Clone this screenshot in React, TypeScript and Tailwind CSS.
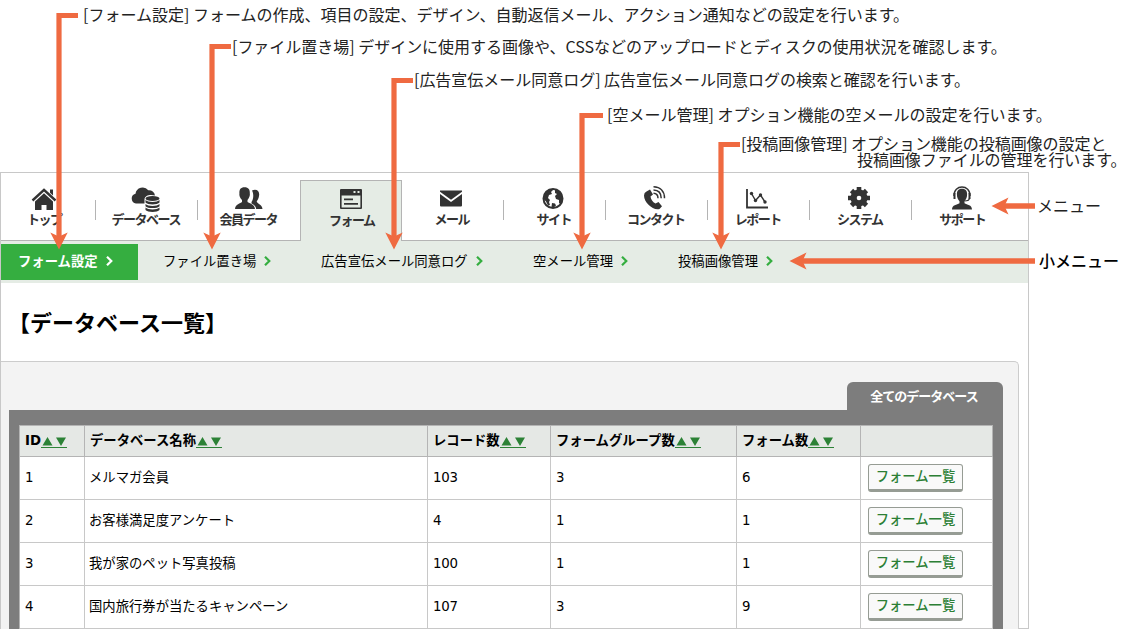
import React from 'react';
import { clsx } from 'clsx';

const ORANGE = '#ef6a41';

interface MenuItem {
  label: string;
  icon: React.ReactNode;
  active?: boolean;
}

const Icon: React.FC<{ children: React.ReactNode }> = ({ children }) => (
  <svg width="32" height="28" viewBox="0 0 32 28" fill="#333" className="shrink-0">
    {children}
  </svg>
);

const menu: MenuItem[] = [
  {
    label: 'トップ',
    icon: (
      <Icon>
        <path d="M4.500 15.500 16 4.800l11.500 10.700" fill="none" stroke="#333" strokeWidth="2.400" />
        <path d="M22 4.500h3v6l-3-2.800z" />
        <path d="M16 8.300 25 16.500V25h-6.500v-5h-5v5H7v-8.500z" />
      </Icon>
    ),
  },
  {
    label: 'データベース',
    icon: (
      <Icon>
        <path d="M7 18.500a5 5 0 0 1-.5-9.800 7.200 7.200 0 0 1 12.800-3.500 6 6 0 0 1 6.700 5.300c-5-1.500-10 0-10.500 3.500v4.500z" />
        <ellipse cx="23.500" cy="13.500" rx="7" ry="2.500" />
        <path d="M16.500 15c2 2.600 12 2.600 14 0v2.600c-2 2.500-12 2.500-14 0zM16.500 19c2 2.600 12 2.600 14 0v2.200c-2 2.500-12 2.500-14 0zM16.500 22.600c2 2.600 12 2.600 14 0V25c-2 2.500-12 2.500-14 0z" />
      </Icon>
    ),
  },
  {
    label: '会員データ',
    icon: (
      <Icon>
        <path d="M20 5.500c5-2 8 1 7 5.500-.4 2.500-1.200 4-2.300 5.300 0 2.400 5.300 2.900 5.800 7.700h-6.300c-.4-3-2.400-4.500-4.700-5.500v-1.500c2-2.500 2.500-8 .5-11.500z" />
        <path d="M12.500 2.200c4 0 5.600 2.600 5.300 6 .5 2.300-.8 5-2.300 6.800v2c2 1.700 7 1.700 7.500 7H3c.4-5.300 5.500-5.300 7-7v-2c-2-2-3-4.500-2.600-6.800-.2-3.700 1.200-6 5.100-6z" />
      </Icon>
    ),
  },
  {
    label: 'フォーム',
    active: true,
    icon: (
      <Icon>
        <path fillRule="evenodd" d="M6 3h20q1 0 1 1v18q0 1-1 1H6q-1 0-1-1V4q0-1 1-1zm.600 6.500V21.400h18.800V9.500zM18.500 5v2h2V5zm4 0v2h2V5z" />
        <path d="M9 12.500h9v1.800H9zM9 17h14v1.800H9z" />
      </Icon>
    ),
  },
  {
    label: 'メール',
    icon: (
      <Icon>
        <path d="M5 5.500h22v1.300l-11 8-11-8z" />
        <path d="m5 9 11 8 11-8v11.500q0 1-1 1H6q-1 0-1-1z" />
      </Icon>
    ),
  },
  {
    label: 'サイト',
    icon: (
      <Icon>
        <circle cx="16" cy="13.500" r="9.500" fill="#fff" stroke="#333" strokeWidth="2" />
        <path d="M7 10c1-3 3-5 6-6l3 1-2 2 1 2-3 1-1 3 2 2-1 2 1 3-2 .5-2-4-2-2zM18 4l6 3 1.500 5v4l-2 3-1.500-1v-3l-3-1-1-3 2-2-2-1zM15 18l3 .5 1 2-3 2.500-1.500-1z" />
      </Icon>
    ),
  },
  {
    label: 'コンタクト',
    icon: (
      <Icon>
        <path d="M7.500 6.500 11 4.600l3 5-2.500 2c.5 3.200 2 5.300 5 7l3-1.600 3.500 4.300-2.500 2.600c-6 2-15.500-6-15.500-13.400q0-3 2.500-4z" />
        <g fill="none" stroke="#333" strokeWidth="1.500">
          <path d="M14.500 8.200c3 .1 4.500 2 4.500 5" />
          <path d="M14.500 4.900c5 .1 7.700 3.300 7.700 8.300" />
          <path d="M14.500 1.800c7 .1 11 4.400 11 11.400" />
        </g>
      </Icon>
    ),
  },
  {
    label: 'レポート',
    icon: (
      <Icon>
        <g fill="none" stroke="#333" strokeWidth="1.800">
          <path d="M6 4v18.500h21" />
          <path d="m10.500 8.500 4 7 5-5.500 4.500 7" strokeWidth="1.400" />
        </g>
        <circle cx="10.500" cy="8.500" r="1.700" />
        <circle cx="14.500" cy="15.500" r="1.700" />
        <circle cx="19.500" cy="10" r="1.700" />
        <circle cx="24" cy="17" r="1.700" />
      </Icon>
    ),
  },
  {
    label: 'システム',
    icon: (
      <Icon>
        <g transform="translate(16 13)">
          <path d="M0-11V11M-11 0H11M-7.500-7.500 7.500 7.500M-7.500 7.500 7.500-7.500" stroke="#333" strokeWidth="4.600" />
          <circle r="8.500" />
          <circle r="2.300" fill="#fff" />
        </g>
      </Icon>
    ),
  },
  {
    label: 'サポート',
    icon: (
      <Icon>
        <path d="M8 11c-.5-12 16.500-12 16 0" fill="none" stroke="#333" strokeWidth="1.400" />
        <path d="M7.500 8h2v6h-2zM22.500 8h2v6h-2z" />
        <path d="M16 3.800c4 0 5.200 2.600 5.100 5.700 0 3-1.300 5.400-2.600 6.700v2c2.500 1.800 7.500 1.300 7.500 6.300H6c0-5 5-4.500 7.500-6.300v-2c-1.300-1.300-2.600-3.700-2.600-6.700-.1-3.100 1.100-5.700 5.100-5.700z" />
        <path d="M23.500 13c0 2-2.500 3-5 3" fill="none" stroke="#333" strokeWidth="1.200" />
      </Icon>
    ),
  },
];

const subMenu = [
  { label: 'フォーム設定', box: 'w-[137px] pl-[17px]', active: true },
  { label: 'ファイル置き場', box: 'w-[157px] pl-[25px]' },
  { label: '広告宣伝メール同意ログ', box: 'w-[212px] pl-[26px]' },
  { label: '空メール管理', box: 'w-[145px] pl-[26px]' },
  { label: '投稿画像管理', box: 'w-[145px] pl-[26px]' },
];

const columns = ['ID', 'データベース名称', 'レコード数', 'フォームグループ数', 'フォーム数'];

const rows = [
  ['1', 'メルマガ会員', '103', '3', '6'],
  ['2', 'お客様満足度アンケート', '4', '1', '1'],
  ['3', '我が家のペット写真投稿', '100', '1', '1'],
  ['4', '国内旅行券が当たるキャンペーン', '107', '3', '9'],
];

const gridCols = 'grid grid-cols-[65px_343px_123px_186px_124px_132px]';

const notes = [
  { text: '[フォーム設定] フォームの作成、項目の設定、デザイン、自動返信メール、アクション通知などの設定を行います。', pos: 'left-[83px] top-[6px]' },
  { text: '[ファイル置き場] デザインに使用する画像や、CSSなどのアップロードとディスクの使用状況を確認します。', pos: 'left-[232px] top-[38px] tracking-[-0.02px]' },
  { text: '[広告宣伝メール同意ログ] 広告宣伝メール同意ログの検索と確認を行います。', pos: 'left-[414px] top-[71px] tracking-[-0.02px]' },
  { text: '[空メール管理] オプション機能の空メールの設定を行います。', pos: 'left-[607px] top-[106px]' },
  { text: '[投稿画像管理] オプション機能の投稿画像の設定と', pos: 'left-[741px] top-[135px] tracking-[-0.04px]' },
  { text: '投稿画像ファイルの管理を行います。', pos: 'left-[857px] top-[151px] tracking-[-0.05px]' },
  { text: 'メニュー', pos: 'left-[1037px] top-[197px]' },
];

// x of the shaft, y of the elbow, right end of the elbow
const arrows = [
  [59, 15.5, 78],
  [212, 46.5, 231],
  [394, 80.5, 413],
  [582, 115.5, 603],
  [721, 144.5, 740],
];

const Sort = () => (
  <span className="flex h-[13px] items-center border-b border-[#2c8236]">
    <svg width="26" height="12" viewBox="0 0 26 12" fill="#2c8236">
      <path d="M6.500 2 11.500 10.500H1.500zM15 2.500h10l-5 8.500z" />
    </svg>
  </span>
);

const Annotations = () => (
  <div className="pointer-events-none absolute inset-0">
    <svg width="1138" height="629" className="absolute inset-0">
      {arrows.map(([x, y, end]) => (
        <g key={x}>
          <path d={`M${end} ${y}H${x}V240`} fill="none" stroke={ORANGE} strokeWidth="5.200" />
          <path d={`M${x} 249.500 ${x - 8.7} 232.500 ${x} 236.500 ${x + 8.7} 232.500z`} fill={ORANGE} />
        </g>
      ))}
      <path d="M1035 206H1002M1035 261H800" stroke={ORANGE} strokeWidth="5.500" />
      <path d="M991.500 206 1008.500 197.500 1004.500 206 1008.500 214.500zM789.500 261 806.500 252.500 802.500 261 806.500 269.500z" fill={ORANGE} />
    </svg>
    {notes.map((n) => (
      <p key={n.text} className={clsx('absolute text-[16px] leading-4 whitespace-nowrap text-[#222]', n.pos)}>
        {n.text}
      </p>
    ))}
    <p className="absolute top-[252px] left-[1039px] text-[16px] leading-4 font-medium whitespace-nowrap text-black">小メニュー</p>
  </div>
);

export default function App() {
  return (
    <div className="relative h-[629px] w-[1138px] overflow-hidden bg-white pt-[172px] font-['Noto_Sans_CJK_JP',sans-serif]">
      <div className="flex h-[457px] w-[1029px] flex-col border border-[#c8c8c8]">
        <nav className="flex h-[67px] shrink-0">
          {menu.map((item, i) => (
            <div key={item.label} className={clsx('flex shrink-0', i === 0 ? 'w-[95px]' : 'w-[102px]')}>
              <div
                className={clsx(
                  'flex grow flex-col items-center',
                  item.active
                    ? 'relative mt-[7px] h-[61px] border border-b-0 border-[#b4b4b4] bg-[#e5ece5] pt-[5px]'
                    : 'pt-[12px]',
                  i === 0 ? 'pr-[9px]' : !item.active && 'pr-[3px]'
                )}
              >
                {item.icon}
                <span className="-mt-[3px] mr-[-1.500px] text-[13px] leading-[18px] font-bold tracking-[-1.500px] whitespace-nowrap text-[#333]">
                  {item.label}
                </span>
              </div>
              {!item.active && i !== 2 && i < 9 && <div className="mt-[27px] h-5 w-px bg-[#b4b4b4]" />}
            </div>
          ))}
        </nav>

        <div className="flex h-[43px] shrink-0 border-t border-[#b4b4b4] bg-[#e5ece5] pt-[3px] text-[13.330px]">
          {subMenu.map((s) => (
            <a
              key={s.label}
              className={clsx('flex h-9 items-center gap-[9px] pb-[2px] whitespace-nowrap', s.box, s.active ? 'bg-[#35ae40] font-bold text-white' : 'text-black')}
            >
              {s.label}
              <svg width="7" height="10" viewBox="0 0 7 10" fill="none" stroke={s.active ? '#fff' : '#35ae40'} strokeWidth="2.200" className="-ml-px">
                <path d="m1 .8 4.300 4.200L1 9.200" />
              </svg>
            </a>
          ))}
        </div>

        <h1 className="h-[78px] shrink-0 pt-[22px] pl-[7px] text-[22px] leading-8 font-bold text-black">【データベース一覧】</h1>

        <section className="mr-[9px] flex grow flex-col rounded-tr-[5px] border-t border-r border-[#ccc] bg-[#f3f3f3] pt-[20px] pr-[15px] pl-[8px]">
          <div className="ml-auto h-7 w-[156px] shrink-0 rounded-t-[6px] bg-[#7d7d7d] pr-0.5 text-center text-[13px] leading-[27px] font-bold tracking-[-1px] text-white">
            全てのデータベース
          </div>
          <div className="grow bg-[#7d7d7d] px-[10px] pt-[15px]">
            <div className="border-t border-l border-[#b4b4b4] bg-white text-[13.330px] text-black">
              <div className={clsx(gridCols, 'h-[31px] bg-[#e5e8e5] font-bold')}>
                {columns.map((c) => (
                  <div key={c} className="flex items-center border-r border-b border-[#b4b4b4] pl-[5px] font-['DejaVu_Sans','Noto_Sans_CJK_JP',sans-serif]">
                    {c}
                    <Sort />
                  </div>
                ))}
                <div className="border-r border-b border-[#b4b4b4]" />
              </div>
              {rows.map((r) => (
                <div key={r[0]} className={clsx(gridCols, 'h-[43px]')}>
                  {r.map((v, i) => (
                    <div
                      key={i}
                      className={clsx(
                        "flex items-center border-r border-b border-[#c8c8c8] font-['DejaVu_Sans','Noto_Sans_CJK_JP',sans-serif]",
                        i === 1 ? 'pl-[4px]' : 'pl-[5px] tracking-[-0.200px]'
                      )}
                    >
                      {v}
                    </div>
                  ))}
                  <div className="border-r border-b border-[#c8c8c8] pt-[7px] pl-[7px]">
                    <button className="block h-7 w-[95px] rounded-[3px] border border-b-[3px] border-[#969c94] bg-[#f9f9f9] pb-0.5 text-[13.330px] leading-[20px] font-medium text-[#2c7f35]">
                      フォーム一覧
                    </button>
                  </div>
                </div>
              ))}
            </div>
          </div>
        </section>
      </div>
      <Annotations />
    </div>
  );
}
